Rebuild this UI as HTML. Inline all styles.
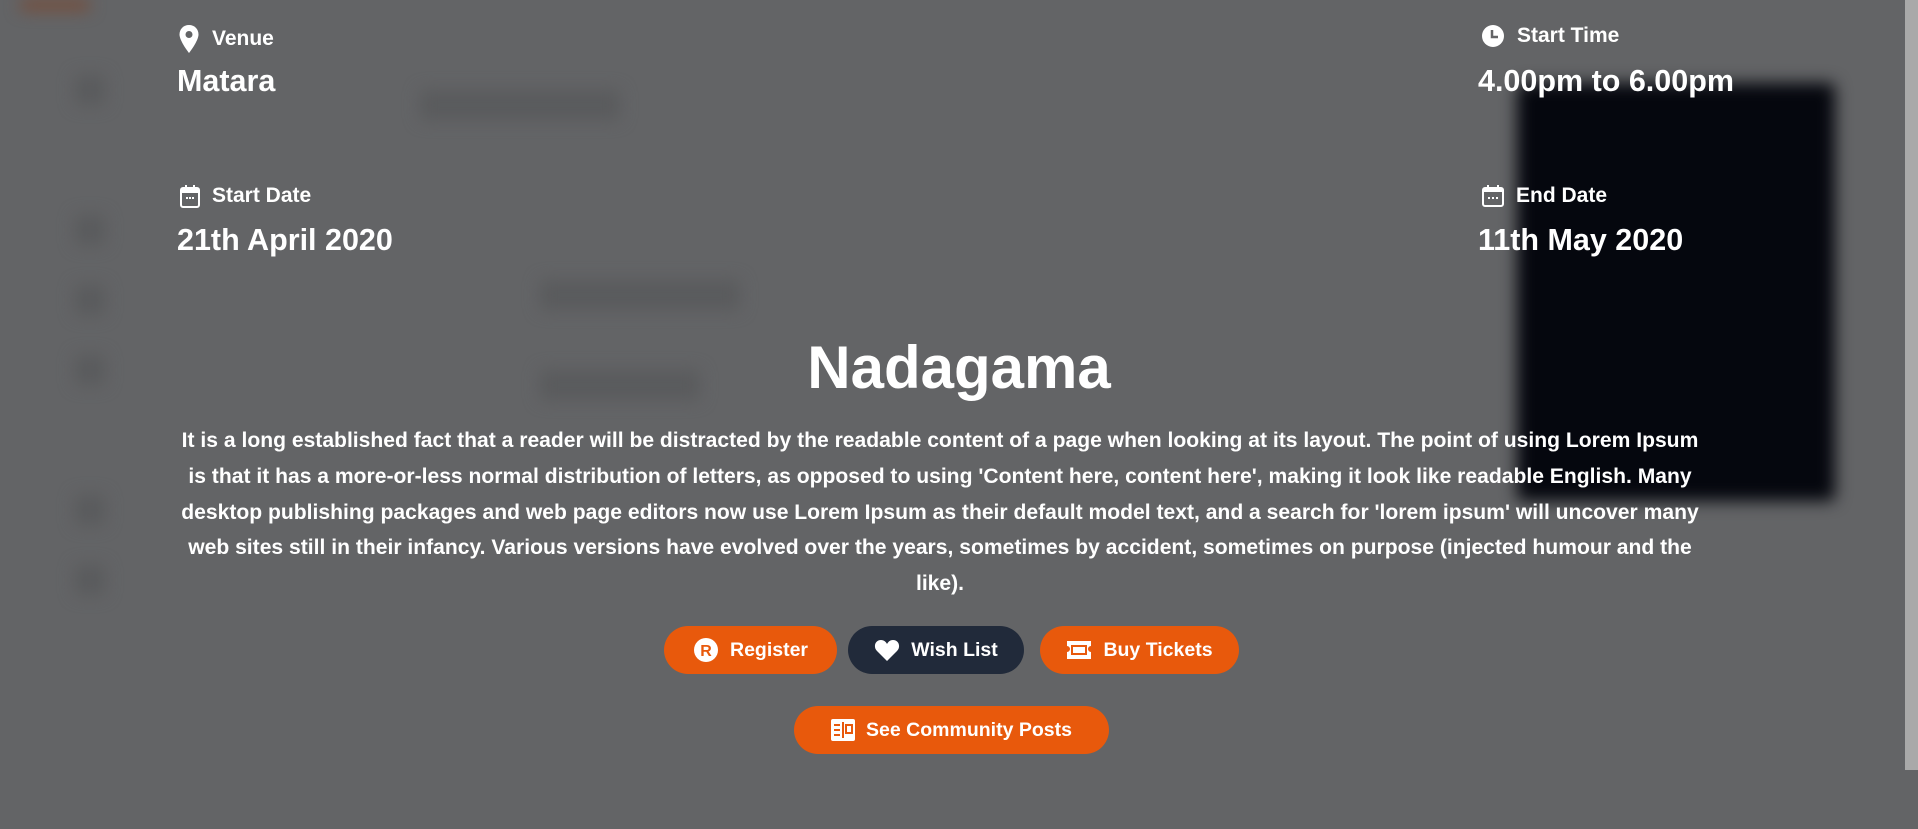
<!DOCTYPE html>
<html><head><meta charset="utf-8"><style>
*{margin:0;padding:0;box-sizing:border-box}
body{width:1918px;height:829px;overflow:hidden;background:#636466;font-family:"Liberation Sans",sans-serif;color:#fff;position:relative}
.blob{position:absolute;background:#5a5b5d;filter:blur(8px);border-radius:4px}
.lbl{position:absolute;font-size:21px;display:flex;align-items:center;gap:12px;font-weight:600}
.val{position:absolute;font-size:30.5px;font-weight:bold}
h1{position:absolute;left:0;width:1918px;top:333px;text-align:center;font-size:60px;font-weight:bold}
.p{position:absolute;left:150px;width:1580px;top:423px;text-align:center;font-size:21.1px;font-weight:bold;line-height:35.8px;white-space:nowrap}
.btn{position:absolute;height:48px;border-radius:24px;background:#e8590c;display:flex;align-items:center;justify-content:center;gap:11px;font-size:19.5px;font-weight:bold}
</style></head><body>
<div class="blob" style="left:20px;top:0;width:70px;height:10px;background:#7a4a34"></div>
<div class="blob" style="left:75px;top:75px;width:30px;height:30px"></div>
<div class="blob" style="left:75px;top:215px;width:30px;height:30px"></div>
<div class="blob" style="left:75px;top:285px;width:30px;height:30px"></div>
<div class="blob" style="left:75px;top:355px;width:30px;height:30px"></div>
<div class="blob" style="left:75px;top:495px;width:30px;height:30px"></div>
<div class="blob" style="left:75px;top:565px;width:30px;height:30px"></div>
<div class="blob" style="left:420px;top:90px;width:200px;height:30px"></div>
<div class="blob" style="left:540px;top:280px;width:200px;height:30px"></div>
<div class="blob" style="left:540px;top:370px;width:160px;height:30px"></div>
<div style="position:absolute;left:1517px;top:83px;width:318px;height:418px;background:#05070e;filter:blur(8px);border-radius:6px"></div>
<div style="position:absolute;left:1905px;top:0;width:13px;height:770px;background:#a9a9a9"></div>

<div class="lbl" style="left:178px;top:24px"><svg width="22" height="30" viewBox="0 0 22 30"><path d="M11 1C5.5 1 1.5 5 1.5 10.5 1.5 17 11 29 11 29s9.5-12 9.5-18.5C20.5 5 16.5 1 11 1z" fill="#fff"/><circle cx="11" cy="10.5" r="3.5" fill="#636466"/></svg>Venue</div>
<div class="val" style="left:177px;top:64px">Matara</div>
<div class="lbl" style="left:180px;top:184px"><svg width="20" height="24" viewBox="0 0 20 24"><rect x="1" y="4" width="18" height="19" rx="2" fill="none" stroke="#fff" stroke-width="2"/><rect x="1" y="4" width="18" height="5" fill="#fff"/><rect x="5" y="1" width="2" height="4" fill="#fff"/><rect x="13" y="1" width="2" height="4" fill="#fff"/><rect x="6" y="13" width="2" height="2" fill="#fff"/><rect x="9" y="13" width="2" height="2" fill="#fff"/><rect x="12" y="13" width="2" height="2" fill="#fff"/></svg>Start Date</div>
<div class="val" style="left:177px;top:223px">21th April 2020</div>

<div class="lbl" style="left:1481px;top:24px"><svg width="24" height="24" viewBox="0 0 24 24"><circle cx="12" cy="12" r="11" fill="#fff"/><path d="M11 6v7h6" fill="none" stroke="#636466" stroke-width="2.5"/></svg>Start Time</div>
<div class="val" style="left:1478px;top:64px">4.00pm to 6.00pm</div>
<div class="lbl" style="left:1482px;top:184px"><svg width="22" height="24" viewBox="0 0 22 24"><rect x="1" y="4" width="20" height="18" rx="2" fill="none" stroke="#fff" stroke-width="2"/><rect x="1" y="4" width="20" height="4" fill="#fff"/><rect x="5" y="1" width="2" height="4" fill="#fff"/><rect x="15" y="1" width="2" height="4" fill="#fff"/><rect x="6" y="13" width="2" height="2" fill="#fff"/><rect x="10" y="13" width="2" height="2" fill="#fff"/><rect x="14" y="13" width="2" height="2" fill="#fff"/></svg>End Date</div>
<div class="val" style="left:1478px;top:223px">11th May 2020</div>

<h1>Nadagama</h1>
<div class="p">It is a long established fact that a reader will be distracted by the readable content of a page when looking at its layout. The point of using Lorem Ipsum<br>is that it has a more-or-less normal distribution of letters, as opposed to using 'Content here, content here', making it look like readable English. Many<br>desktop publishing packages and web page editors now use Lorem Ipsum as their default model text, and a search for 'lorem ipsum' will uncover many<br>web sites still in their infancy. Various versions have evolved over the years, sometimes by accident, sometimes on purpose (injected humour and the<br>like).</div>

<div class="btn" style="left:664px;top:626px;width:173px"><svg width="26" height="26" viewBox="0 0 26 26"><circle cx="13" cy="13" r="12" fill="#fff"/><text x="13" y="19" text-anchor="middle" font-family="Liberation Sans" font-weight="bold" font-size="16" fill="#e8590c">R</text></svg>Register</div>
<div class="btn" style="left:848px;top:626px;width:176px;background:#212a3a"><svg width="26" height="24" viewBox="0 0 26 24"><path d="M13 23L3 13C-1 9 1 2 7 2c3 0 5 2 6 4 1-2 3-4 6-4 6 0 8 7 4 11z" fill="#fff"/></svg>Wish List</div>
<div class="btn" style="left:1040px;top:626px;width:199px"><svg width="26" height="20" viewBox="0 0 26 20"><path d="M1 1h24v5a3 3 0 0 0 0 6v7H1v-7a3 3 0 0 0 0-6z" fill="#fff"/><rect x="5" y="5" width="16" height="10" fill="#e8590c"/><rect x="7" y="7" width="12" height="6" fill="#fff"/></svg>Buy Tickets</div>
<div class="btn" style="left:794px;top:706px;width:315px"><svg width="24" height="22" viewBox="0 0 24 22"><rect x="0" y="0" width="24" height="22" rx="2" fill="#fff"/><rect x="3" y="5" width="6" height="2" fill="#e8590c"/><rect x="3" y="10" width="6" height="2" fill="#e8590c"/><rect x="3" y="15" width="6" height="2" fill="#e8590c"/><rect x="11" y="3" width="2" height="16" fill="#e8590c"/><rect x="15" y="6" width="6" height="8" fill="none" stroke="#e8590c" stroke-width="2"/></svg>See Community Posts</div>
</body></html>
